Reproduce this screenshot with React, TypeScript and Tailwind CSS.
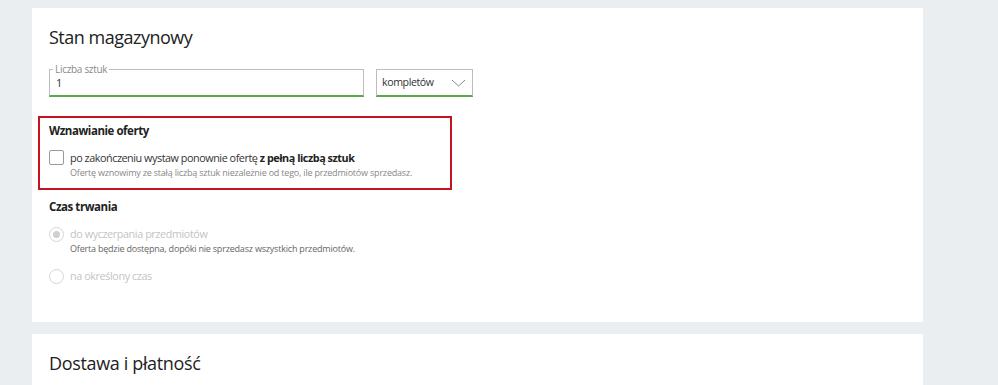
import React from 'react';

function Radio({ checked }: { checked?: boolean }) {
  return (
    <span className="flex h-[15px] w-[15px] shrink-0 items-center justify-center rounded-full border border-[#d6d6d6] bg-white">
      {checked && <span className="h-[7px] w-[7px] rounded-full bg-[#cfcfcf]" />}
    </span>
  );
}

export default function App() {
  return (
    <div className="h-[385px] w-[998px] overflow-hidden bg-[#eaeef1] pl-[32px] pt-[8px] font-['Open_Sans',sans-serif]">
      <div className="flex w-[891px] flex-col gap-[12px]">
        <section className="h-[314px] bg-white pl-[17px] pt-[17px]">
          <h2 className="text-[18px] leading-[24px] tracking-[-0.5px] text-[#222]">Stan magazynowy</h2>

          <div className="mt-[20px] flex items-start gap-[12px]">
            <div className="relative h-[28px] w-[315px] border border-[#bdbdbd] border-b-[2px] border-b-[#5aa84a]">
              <span className="absolute -top-[8px] left-[3px] bg-white px-[2px] text-[10px] leading-[14px] tracking-[-0.3px] text-[#8b8b8b]">
                Liczba sztuk
              </span>
              <span className="absolute left-[6px] top-[6px] text-[11px] leading-[14px] text-[#333]">1</span>
            </div>
            <div className="flex h-[28px] w-[97px] items-center justify-between border border-[#bdbdbd] border-b-[2px] border-b-[#5aa84a] pl-[5px] pr-[6px]">
              <span className="text-[10.6px] tracking-[-0.4px] text-[#333]">kompletów</span>
              <svg width="15" height="8" viewBox="0 0 15 8" fill="none" stroke="#8a8a8a" strokeWidth="1">
                <path d="M1 1l6.5 6 6.5-6" />
              </svg>
            </div>
          </div>

          <div className="-ml-[11px] mt-[19px] h-[74px] w-[414px] border-2 border-[#c4131f] pl-[9px] pt-[4px]">
            <h3 className="text-[11.5px] font-bold leading-[18px] tracking-[-0.45px] text-[#222]">Wznawianie oferty</h3>
            <div className="mt-[10px] flex items-start gap-[6px]">
              <span className="h-[15px] w-[15px] shrink-0 rounded-[2px] border border-[#9a9a9a] bg-white" />
              <div>
                <p className="text-[10.8px] leading-[16px] tracking-[-0.45px] text-[#333]">
                  po zakończeniu wystaw ponownie ofertę <b className="font-bold text-[#222]">z pełną liczbą sztuk</b>
                </p>
                <p className="text-[9px] leading-[13px] tracking-[-0.2px] text-[#888]">
                  Ofertę wznowimy ze stałą liczbą sztuk niezależnie od tego, ile przedmiotów sprzedasz.
                </p>
              </div>
            </div>
          </div>

          <h3 className="mt-[8px] text-[11.5px] font-bold leading-[18px] tracking-[-0.45px] text-[#222]">Czas trwania</h3>
          <div className="mt-[10px] flex items-start gap-[6px]">
            <span className="mt-[1px]"><Radio checked /></span>
            <div>
              <p className="text-[10.8px] leading-[16px] tracking-[-0.4px] text-[#c4c4c4]">do wyczerpania przedmiotów</p>
              <p className="text-[9px] leading-[13px] tracking-[-0.2px] text-[#666]">
                Oferta będzie dostępna, dopóki nie sprzedasz wszystkich przedmiotów.
              </p>
            </div>
          </div>
          <div className="mt-[13px] flex items-center gap-[6px]">
            <Radio />
            <p className="text-[10.8px] leading-[16px] tracking-[-0.4px] text-[#c4c4c4]">na określony czas</p>
          </div>
        </section>

        <section className="h-[60px] bg-white pl-[17px] pt-[17px]">
          <h2 className="text-[18px] leading-[24px] tracking-[-0.35px] text-[#222]">Dostawa i płatność</h2>
        </section>
      </div>
    </div>
  );
}
